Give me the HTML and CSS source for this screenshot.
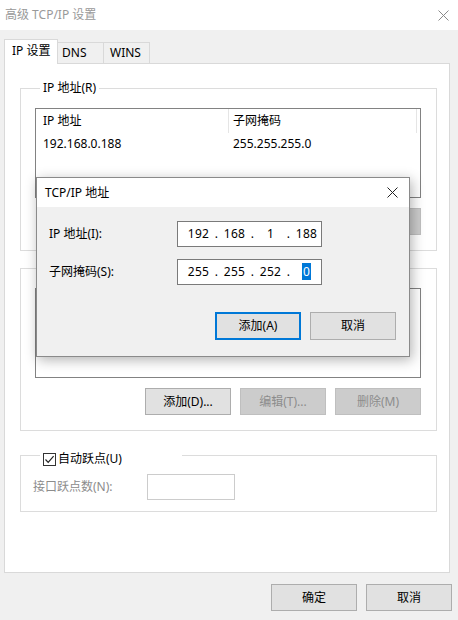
FILE: index.html
```html
<!DOCTYPE html>
<html lang="zh-CN">
<head>
  <meta charset="UTF-8" />
  <title>高级 TCP/IP 设置</title>
  <link rel="stylesheet" href="styles.css">
</head>
<body>
  <div class="titlebar">
    <span class="title">高级 TCP/IP 设置</span>
    <svg class="close" viewBox="0 0 11 11"><path d="M0.5 0.5L10.5 10.5M10.5 0.5L0.5 10.5" stroke="#8a8a8a" stroke-width="1" fill="none"/></svg>
  </div>

  <div class="tabs">
    <div class="tab active">IP 设置</div>
    <div class="tab tab-dns">DNS</div>
    <div class="tab tab-wins">WINS</div>
  </div>

  <div class="panel">
    <fieldset class="group">
      <legend>IP 地址(R)</legend>
      <div class="list">
        <div class="list-head">
          <span class="col1">IP 地址</span>
          <span class="col2">子网掩码</span>
        </div>
        <div class="list-row">
          <span class="col1">192.168.0.188</span>
          <span class="col2">255.255.255.0</span>
        </div>
      </div>
      <!-- covered by the dialog, only the right edge shows -->
      <div class="btn-row">
        <button class="btn"></button>
        <button class="btn"></button>
        <button class="btn" disabled></button>
      </div>
    </fieldset>

    <fieldset class="group gateway">
      <legend>默认网关(F):</legend>
      <div class="list"></div>
      <div class="btn-row">
        <button class="btn">添加(D)...</button>
        <button class="btn" disabled>编辑(T)...</button>
        <button class="btn" disabled>删除(M)</button>
      </div>
    </fieldset>

    <fieldset class="group metric">
      <legend class="check-legend">
        <span class="checkbox"><svg viewBox="0 0 11 11"><path d="M1.5 5.5L4.2 8.3L9.6 2.2" stroke="#222" stroke-width="1.2" fill="none"/></svg></span>
        <span>自动跃点(U)</span>
      </legend>
      <div class="metric-row">
        <span class="metric-label">接口跃点数(N):</span>
        <span class="metric-input"></span>
      </div>
    </fieldset>
  </div>

  <div class="footer">
    <button class="btn">确定</button>
    <button class="btn">取消</button>
  </div>

  <div class="dialog">
    <div class="dialog-title">
      <span>TCP/IP 地址</span>
      <svg class="close" viewBox="0 0 11 11"><path d="M0.5 0.5L10.5 10.5M10.5 0.5L0.5 10.5" stroke="#222" stroke-width="1" fill="none"/></svg>
    </div>
    <div class="dialog-body">
      <div class="field">
        <span class="field-label">IP 地址(I):</span>
        <span class="ip-box">
          <span class="seg">192</span><span class="dot">.</span><span class="seg">168</span><span class="dot">.</span><span class="seg">1</span><span class="dot">.</span><span class="seg">188</span>
        </span>
      </div>
      <div class="field">
        <span class="field-label">子网掩码(S):</span>
        <span class="ip-box">
          <span class="seg">255</span><span class="dot">.</span><span class="seg">255</span><span class="dot">.</span><span class="seg">252</span><span class="dot">.</span><span class="seg"><span class="sel">0</span></span>
        </span>
      </div>
      <div class="dialog-btns">
        <button class="btn default">添加(A)</button>
        <button class="btn">取消</button>
      </div>
    </div>
  </div>
</body>
</html>
```

FILE: styles.css
```css
* {
  margin: 0;
  padding: 0;
  box-sizing: border-box;
}
body {
  width: 458px;
  height: 620px;
  background: #f0f0f0;
  color: #000;
  font: 12px/16px "Noto Sans", "Noto Sans CJK SC", sans-serif;
  position: relative;
  overflow: hidden;
}
.titlebar {
  height: 30px;
  background: #fff;
  display: flex;
  align-items: center;
  justify-content: space-between;
  padding: 0 9px 0 5px;
}
.titlebar .title {
  color: #999;
}
.close {
  width: 11px;
  height: 11px;
  display: block;
}
.tabs {
  display: flex;
  align-items: flex-end;
  height: 24px;
  margin: 9px 0 0 4px;
}
.tab {
  height: 21px;
  line-height: 20px;
  border: 1px solid #d9d9d9;
  border-bottom: none;
  background: #f0f0f0;
  margin-left: -1px;
}
.tab.active {
  height: 25px;
  width: 54px;
  margin: 0 0 -1px 0;
  padding: 3px 0 0 7px;
  line-height: 16px;
  background: #fff;
  position: relative;
  z-index: 1;
}
.tab-dns {
  width: 47px;
  padding-left: 4px;
}
.tab-wins {
  width: 47px;
  padding-left: 6px;
}
.panel {
  width: 446px;
  height: 510px;
  margin-left: 4px;
  background: #fff;
  border: 1px solid #d9d9d9;
  padding: 16px 0 0 15px;
}
.group {
  width: 417px;
  border: 1px solid #dcdcdc;
  padding: 0 15px 15px 14px;
  min-width: 0;
}
.group legend {
  margin-left: 5px;
  padding: 0 3px;
  line-height: 16px;
}
.gateway {
  margin-top: 9px;
}
.list {
  height: 90px;
  margin-top: 12px;
  border: 1px solid #828282;
  background: #fff;
}
.list-head,
.list-row {
  display: flex;
}
.list-head {
  height: 24px;
  line-height: 24px;
}
.list-row {
  line-height: 22px;
}
.col1 {
  width: 193px;
  padding-left: 7px;
}
.col2 {
  width: 188px;
  padding-left: 4px;
}
.list-head .col1,
.list-head .col2 {
  border-right: 1px solid #e5e5e5;
}
.btn-row {
  display: flex;
  justify-content: flex-end;
  gap: 9px;
  margin-top: 10px;
}
.btn {
  width: 86px;
  height: 27px;
  background: #e1e1e1;
  border: 1px solid #adadad;
  font: inherit;
  color: #000;
}
.btn:disabled {
  background: #cccccc;
  border-color: #bfbfbf;
  color: #8c8c8c;
}
.metric {
  margin-top: 12px;
  padding: 0 15px 11px 12px;
}
.group .check-legend {
  width: 142px;
  height: 24px;
  margin-left: 7px;
  padding: 8px 0 0 3px;
  line-height: 16px;
  display: flex;
  align-items: center;
  gap: 2px;
}
.checkbox {
  width: 13px;
  height: 13px;
  border: 1px solid #333;
  background: #fff;
  display: flex;
  align-items: center;
  justify-content: center;
}
.checkbox svg {
  width: 11px;
  height: 11px;
}
.metric-row {
  display: flex;
  align-items: center;
  margin-top: 7px;
}
.metric-label {
  width: 114px;
  color: #8c8c8c;
}
.metric-input {
  width: 88px;
  height: 26px;
  border: 1px solid #cccccc;
  background: #fff;
}
.footer {
  display: flex;
  justify-content: flex-end;
  gap: 9px;
  margin-top: 11px;
  padding-right: 6px;
}
.dialog {
  position: absolute;
  left: 36px;
  top: 177px;
  width: 374px;
  height: 180px;
  background: #f0f0f0;
  border: 1px solid #8a8a8a;
  box-shadow: 2px 3px 12px rgba(0, 0, 0, 0.3);
  z-index: 10;
}
.dialog-title {
  height: 29px;
  background: #fff;
  display: flex;
  align-items: center;
  justify-content: space-between;
  padding: 0 11px 0 8px;
}
.dialog-body {
  padding: 14px 13px 0 12px;
}
.field {
  display: flex;
  align-items: center;
  margin-bottom: 12px;
}
.field-label {
  width: 128px;
}
.ip-box {
  width: 145px;
  height: 26px;
  background: #fff;
  border: 1px solid #7a7a7a;
  display: flex;
  align-items: center;
  padding-left: 6px;
  letter-spacing: 0.3px;
}
.seg {
  width: 29px;
  text-align: center;
}
.dot {
  width: 7px;
  text-align: center;
}
.sel {
  background: #0078d7;
  color: #fff;
  padding: 0 1px;
}
.dialog-btns {
  display: flex;
  justify-content: flex-end;
  gap: 9px;
  margin-top: 27px;
}
.dialog-btns .btn {
  height: 28px;
}
.btn.default {
  border: 2px solid #0078d7;
}
```
